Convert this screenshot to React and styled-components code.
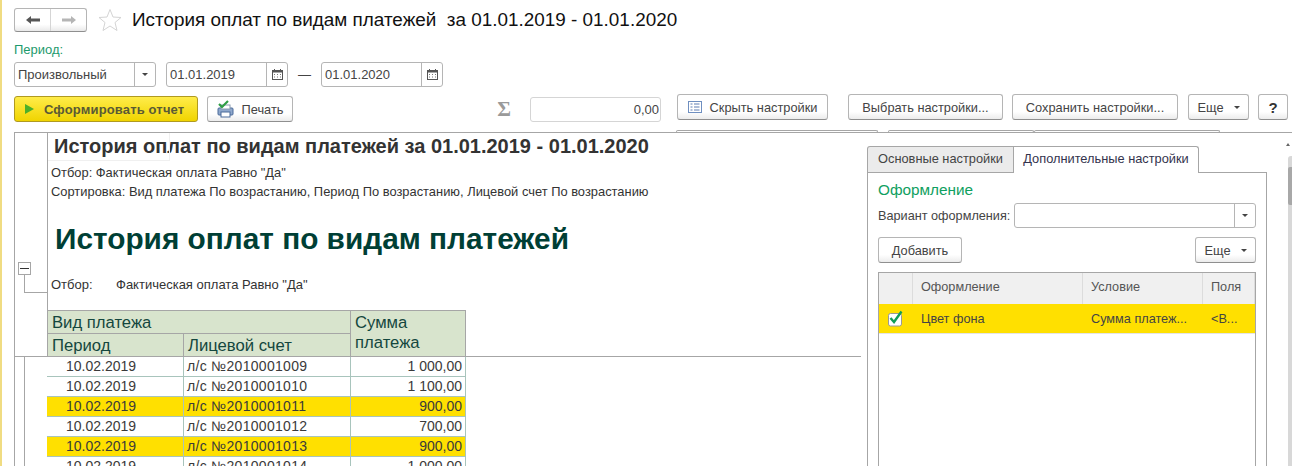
import React from 'react'
import styled, { createGlobalStyle } from 'styled-components'

const GlobalStyle = createGlobalStyle`
  html, body {
    margin: 0;
    padding: 0;
    background: #fff;
    overflow: hidden;
  }
  body {
    font-family: "Liberation Sans", Arial, sans-serif;
    color: #333;
  }
`

const rows = [
  { date: '10.02.2019', account: 'л/с №2010001009', sum: '1 000,00' },
  { date: '10.02.2019', account: 'л/с №2010001010', sum: '1 100,00' },
  { date: '10.02.2019', account: 'л/с №2010001011', sum: '900,00', marked: true },
  { date: '10.02.2019', account: 'л/с №2010001012', sum: '700,00' },
  { date: '10.02.2019', account: 'л/с №2010001013', sum: '900,00', marked: true },
  { date: '10.02.2019', account: 'л/с №2010001014', sum: '1 000,00' },
]

function ArrowLeft({ color }) {
  return (
    <svg width="16" height="10" viewBox="0 0 16 10">
      <path d="M1 5 L6 1 V3.5 H15 V6.5 H6 V9 Z" fill={color} />
    </svg>
  )
}

function ArrowRight({ color }) {
  return (
    <svg width="16" height="10" viewBox="0 0 16 10">
      <path d="M15 5 L10 1 V3.5 H1 V6.5 H10 V9 Z" fill={color} />
    </svg>
  )
}

function Star() {
  return (
    <svg width="24" height="24" viewBox="0 0 24 24">
      <path d="M12 1.5 L15 9 L23 9.5 L17 14.5 L19 22.5 L12 18 L5 22.5 L7 14.5 L1 9.5 L9 9 Z" fill="#fff" stroke="#d4d4d4" strokeWidth="1" />
    </svg>
  )
}

function Calendar() {
  return (
    <svg width="11" height="11" viewBox="0 0 11 11">
      <rect x="0.5" y="1.5" width="10" height="9" fill="#fff" stroke="#555" />
      <rect x="0.5" y="1.5" width="10" height="2" fill="#555" />
      <path d="M2.5 0 V2 M8.5 0 V2" stroke="#555" />
      <path d="M2 5.5 H3 M5 5.5 H6 M8 5.5 H9 M2 8 H3 M5 8 H6 M8 8 H9" stroke="#777" />
    </svg>
  )
}

function PrintIcon() {
  return (
    <svg width="17" height="18" viewBox="0 0 17 18">
      <rect x="1" y="8" width="15" height="7" rx="1" fill="#8fa8cc" stroke="#4a6a9a" />
      <rect x="4" y="12" width="9" height="5" fill="#fff" stroke="#4a6a9a" />
      <rect x="4" y="5" width="9" height="4" fill="#fff" stroke="#8a9ab0" />
      <path d="M2 4 L5 7 L11 1" fill="none" stroke="#2f9e44" strokeWidth="2.2" />
    </svg>
  )
}

function SettingsIcon() {
  return (
    <svg width="14" height="12" viewBox="0 0 14 12">
      <rect x="0.5" y="0.5" width="13" height="11" fill="#fff" stroke="#6f8fc0" />
      <path d="M2.5 3 H4.5 M2.5 6 H4.5 M2.5 9 H4.5 M6 3 H11.5 M6 6 H11.5 M6 9 H11.5" stroke="#5c7db3" />
    </svg>
  )
}

function CheckMark() {
  return (
    <svg width="17" height="17" viewBox="0 0 17 17">
      <rect x="1.5" y="3.5" width="13" height="12.5" rx="2" fill="#fff" stroke="#999" />
      <path d="M3.5 8 L7 12 L14.5 1.5" fill="none" stroke="#0f9d58" strokeWidth="2.4" />
    </svg>
  )
}

export default function App() {
  return (
    <Page>
      <GlobalStyle />
      <Header>
        <NavGroup>
          <NavCell><ArrowLeft color="#555" /></NavCell>
          <NavCell $divided><ArrowRight color="#b5b5b5" /></NavCell>
        </NavGroup>
        <StarSlot><Star /></StarSlot>
        <Title>История оплат по видам платежей&nbsp; за 01.01.2019 - 01.01.2020</Title>
      </Header>

      <PeriodLabel>Период:</PeriodLabel>
      <PeriodRow>
        <Field $width={142}>
          <FieldText>Произвольный</FieldText>
          <FieldButton><Caret /></FieldButton>
        </Field>
        <Field $width={122} $left={10}>
          <FieldText>01.01.2019</FieldText>
          <FieldButton><Calendar /></FieldButton>
        </Field>
        <Dash>—</Dash>
        <Field $width={122}>
          <FieldText>01.01.2020</FieldText>
          <FieldButton><Calendar /></FieldButton>
        </Field>
      </PeriodRow>

      <ActionRow>
        <PrimaryButton><PlayIcon />Сформировать отчет</PrimaryButton>
        <PlainButton $width={86} $left={9}><PrintIcon />Печать</PlainButton>
        <Sigma>Σ</Sigma>
        <SumField>0,00</SumField>
        <SettingsBar>
          <PlainButton $width={151}><SettingsIcon />Скрыть настройки</PlainButton>
          <PlainButton $width={155} $left={20}>Выбрать настройки...</PlainButton>
          <PlainButton $width={166} $left={9}>Сохранить настройки...</PlainButton>
          <PlainButton $width={61} $left={10}>Еще <SmallCaret /></PlainButton>
          <PlainButton $width={30} $left={9}><Question>?</Question></PlainButton>
        </SettingsBar>
      </ActionRow>

      <ClippedRow>
        <ClippedTab $width={202} $left={662} />
        <ClippedTab $width={146} $left={10} />
        <ClippedTab $width={186} />
      </ClippedRow>

      <Body>
        <Gutter>
          <GutterTop>
            <Collapse />
          </GutterTop>
          <GutterBottom />
        </Gutter>
        <Report>
          <ReportTitle>История оплат по видам платежей за 01.01.2019 - 01.01.2020</ReportTitle>
          <ReportNote $top={2}>Отбор: Фактическая оплата Равно "Да"</ReportNote>
          <ReportNote>Сортировка: Вид платежа По возрастанию, Период По возрастанию, Лицевой счет По возрастанию</ReportNote>
          <BigTitle>История оплат по видам платежей</BigTitle>
          <FilterRow>
            <span>Отбор:</span>
            <span>Фактическая оплата Равно "Да"</span>
          </FilterRow>
          <Table>
            <HeadCell $area="1 / 1 / 2 / 3" $first>Вид платежа</HeadCell>
            <HeadCell $area="1 / 3 / 3 / 4">Сумма платежа</HeadCell>
            <HeadCell $area="2 / 1 / 3 / 2" $first>Период</HeadCell>
            <HeadCell $area="2 / 2 / 3 / 3">Лицевой счет</HeadCell>
            {rows.map((row) => (
              <React.Fragment key={row.account}>
                <DateCell $marked={row.marked}>{row.date}</DateCell>
                <AccountCell $marked={row.marked}>{row.account}</AccountCell>
                <SumCell $marked={row.marked}>{row.sum}</SumCell>
              </React.Fragment>
            ))}
          </Table>
          <TableRule />
        </Report>
        <Panel>
          <Tabs>
            <Tab $width={147}>Основные настройки</Tab>
            <Tab $width={185} $active>Дополнительные настройки</Tab>
          </Tabs>
          <TabBody>
            <SectionTitle>Оформление</SectionTitle>
            <VariantRow>
              <VariantLabel>Вариант оформления:</VariantLabel>
              <VariantField><FieldButton><Caret /></FieldButton></VariantField>
            </VariantRow>
            <ListTools>
              <PlainButton $width={84}>Добавить</PlainButton>
              <PlainButton $width={61}>Еще <SmallCaret /></PlainButton>
            </ListTools>
            <ListBox>
              <ListHead>
                <ListHeadCell />
                <ListHeadCell>Оформление</ListHeadCell>
                <ListHeadCell>Условие</ListHeadCell>
                <ListHeadCell>Поля</ListHeadCell>
              </ListHead>
              <ListRow>
                <ListCell><CheckMark /></ListCell>
                <ListCell>Цвет фона</ListCell>
                <ListCell>Сумма платеж...</ListCell>
                <ListCell>&lt;В...</ListCell>
              </ListRow>
            </ListBox>
          </TabBody>
        </Panel>
        <ScrollArrow />
        <PageScroll>
          <PageThumb />
        </PageScroll>
      </Body>
    </Page>
  )
}

const Page = styled.div`
  width: 1292px;
  height: 466px;
  box-sizing: border-box;
  overflow: hidden;
  border-left: 2px solid #f0dc82;
  padding-left: 12px;
  display: flex;
  flex-direction: column;
`

const Header = styled.div`
  display: flex;
  align-items: center;
  height: 26px;
  margin-top: 7px;
`

const NavGroup = styled.div`
  display: flex;
  width: 73px;
  height: 24px;
  box-sizing: border-box;
  border: 1px solid #b5b5b5;
  border-bottom-color: #8f8f8f;
  border-radius: 3px;
  background: linear-gradient(#fff 70%, #e9e9e9);
`

const NavCell = styled.div`
  flex: 1;
  display: flex;
  align-items: center;
  justify-content: center;
  border-left: ${(props) => (props.$divided ? '1px solid #d5d5d5' : 'none')};
`

const StarSlot = styled.div`
  display: flex;
  margin-left: 11px;
`

const Title = styled.h1`
  margin: 0 0 0 10px;
  font-size: 18.9px;
  font-weight: 400;
  color: #111;
  white-space: nowrap;
`

const PeriodLabel = styled.div`
  margin-top: 9px;
  height: 15px;
  line-height: 15px;
  font-size: 13px;
  color: #1d9a6c;
`

const PeriodRow = styled.div`
  display: flex;
  align-items: center;
  margin-top: 5px;
`

const Field = styled.div`
  display: flex;
  width: ${(props) => props.$width}px;
  height: 25px;
  margin-left: ${(props) => props.$left || 0}px;
  box-sizing: border-box;
  border: 1px solid #b5b5b5;
  border-radius: 3px;
  background: #fff;
`

const FieldText = styled.div`
  flex: 1;
  padding-left: 3px;
  font-size: 13px;
  line-height: 23px;
  color: #444;
`

const FieldButton = styled.div`
  width: 21px;
  flex: none;
  display: flex;
  align-items: center;
  justify-content: center;
  border-left: 1px solid #b5b5b5;
  box-sizing: border-box;
`

const Caret = styled.span`
  width: 0;
  height: 0;
  border-left: 3px solid transparent;
  border-right: 3px solid transparent;
  border-top: 3px solid #444;
`

const SmallCaret = styled(Caret)`
  display: inline-block;
  margin-left: 2px;
  vertical-align: middle;
`

const Dash = styled.div`
  width: 33px;
  text-align: center;
  font-size: 13px;
  color: #444;
`

const ActionRow = styled.div`
  display: flex;
  align-items: center;
  height: 26px;
  margin-top: 9px;
`

const PrimaryButton = styled.div`
  width: 184px;
  height: 26px;
  box-sizing: border-box;
  display: flex;
  align-items: center;
  padding-left: 10px;
  gap: 10px;
  border: 1px solid #b09a20;
  border-radius: 3px;
  background: linear-gradient(#ffec4a, #f0d400);
  font-size: 13px;
  font-weight: 700;
  letter-spacing: 0.15px;
  color: #5a5a35;
  white-space: nowrap;
`

const PlayIcon = styled.span`
  width: 0;
  height: 0;
  border-top: 5px solid transparent;
  border-bottom: 5px solid transparent;
  border-left: 9px solid #4caf2a;
`

const PlainButton = styled.div`
  width: ${(props) => props.$width}px;
  height: 26px;
  margin-left: ${(props) => props.$left || 0}px;
  flex: none;
  box-sizing: border-box;
  display: flex;
  align-items: center;
  justify-content: center;
  gap: 8px;
  border: 1px solid #b5b5b5;
  border-bottom-color: #8f8f8f;
  border-radius: 3px;
  background: linear-gradient(#fff 70%, #ececec);
  font-size: 12.8px;
  color: #444;
  white-space: nowrap;
`

const Sigma = styled.div`
  width: 16px;
  margin-left: 203px;
  font-family: "Liberation Serif", serif;
  font-size: 21px;
  font-weight: 700;
  color: #9a9a9a;
  text-align: center;
`

const SumField = styled.div`
  width: 131px;
  height: 25px;
  margin-left: 18px;
  box-sizing: border-box;
  border: 1px solid #d5d5d5;
  border-radius: 3px;
  padding-right: 1px;
  text-align: right;
  font-size: 13px;
  line-height: 23px;
  color: #444;
`

const SettingsBar = styled.div`
  display: flex;
  align-self: flex-start;
  margin: -2px 0 0 16px;
`

const Question = styled.span`
  font-size: 15px;
  font-weight: 700;
  color: #333;
`

const ClippedRow = styled.div`
  display: flex;
  height: 2px;
  margin-top: 8px;
`

const ClippedTab = styled.div`
  width: ${(props) => props.$width}px;
  margin-left: ${(props) => props.$left || 0}px;
  box-sizing: border-box;
  border: 1px solid #a6a6a6;
  border-bottom: none;
  border-radius: 2px 2px 0 0;
`

const Body = styled.div`
  position: relative;
  display: flex;
  flex: 1;
  min-height: 0;
  border-top: 1px solid #a6a6a6;
`

const Gutter = styled.div`
  width: 33px;
  flex: none;
  border-left: 1px solid #a6a6a6;
`

const GutterTop = styled.div`
  position: relative;
  height: 223px;
  border-right: 1px solid #a6a6a6;
  border-bottom: 1px solid #a6a6a6;
`

const GutterBottom = styled.div`
  height: 110px;
  margin-left: 9px;
  border-left: 1px solid #a6a6a6;
`

const Collapse = styled.div`
  position: absolute;
  left: 3px;
  top: 129px;
  width: 11px;
  height: 11px;
  border: 1px solid #a6a6a6;
  background: linear-gradient(#333, #333) center / 9px 1px no-repeat, #fff;
  &::after {
    content: '';
    position: absolute;
    left: 5px;
    top: 11px;
    width: 22px;
    height: 18px;
    border-left: 1px solid #a6a6a6;
    border-bottom: 1px solid #a6a6a6;
  }
`

const Report = styled.div`
  position: relative;
  width: 813px;
  flex: none;
`

const ReportTitle = styled.div`
  position: relative;
  height: 28px;
  padding-left: 6px;
  line-height: 27px;
  font-size: 20px;
  font-weight: 700;
  color: #333;
  white-space: nowrap;
  &::before {
    content: '';
    position: absolute;
    left: 0;
    top: 0;
    width: 122px;
    height: 28px;
    box-sizing: border-box;
    border-right: 1px solid #f0f0f0;
    border-bottom: 1px solid #f0f0f0;
  }
`

const ReportNote = styled.div`
  height: 19px;
  margin-top: ${(props) => props.$top || 0}px;
  padding-left: 3px;
  line-height: 19px;
  font-size: 12.9px;
  color: #333;
  white-space: nowrap;
`

const BigTitle = styled.div`
  margin-top: 16px;
  padding-left: 7px;
  height: 44px;
  line-height: 44px;
  font-size: 29.8px;
  font-weight: 700;
  color: #003f35;
  white-space: nowrap;
`

const FilterRow = styled.div`
  display: flex;
  margin-top: 16px;
  padding-left: 3px;
  height: 16px;
  line-height: 16px;
  font-size: 13px;
  color: #333;
  & > span:first-child {
    width: 65px;
  }
`

const Table = styled.div`
  display: grid;
  grid-template-columns: 137px 167px 115px;
  grid-template-rows: 23px 23px repeat(6, 20px);
  width: 419px;
  margin: 17px 0 0 -1px;
  border-top: 1px solid #a6a6a6;
`

const HeadCell = styled.div`
  grid-area: ${(props) => props.$area};
  box-sizing: border-box;
  padding: 2px 4px 0;
  background: #d8e4cd;
  border-left: ${(props) => (props.$first ? '1px solid #a6a6a6' : 'none')};
  border-right: 1px solid #a6a6a6;
  border-bottom: 1px solid #a6a6a6;
  font-size: 16.67px;
  line-height: 20px;
  color: #14473e;
`

const Cell = styled.div`
  box-sizing: border-box;
  background: ${(props) => (props.$marked ? '#ffe000' : '#fff')};
  border-right: 1px solid #a8c4bc;
  border-bottom: 1px solid #a8c4bc;
  font-size: 14px;
  line-height: 19px;
  color: #3a3a3a;
  white-space: nowrap;
`

const DateCell = styled(Cell)`
  padding-left: 19px;
`

const AccountCell = styled(Cell)`
  padding-left: 3px;
  letter-spacing: 0.3px;
`

const SumCell = styled(Cell)`
  padding-right: 3px;
  text-align: right;
`

const TableRule = styled.div`
  position: absolute;
  left: 418px;
  top: 223px;
  width: 395px;
  height: 1px;
  background: #a6a6a6;
`

const Panel = styled.div`
  width: 400px;
  margin-left: 6px;
  margin-top: 13px;
  flex: none;
  display: flex;
  flex-direction: column;
`

const Tabs = styled.div`
  display: flex;
  align-items: flex-start;
  height: 26px;
`

const Tab = styled.div`
  width: ${(props) => props.$width}px;
  height: ${(props) => (props.$active ? 27 : 26)}px;
  box-sizing: border-box;
  text-align: center;
  line-height: 24px;
  font-size: 12.8px;
  color: ${(props) => (props.$active ? '#33334d' : '#444')};
  background: ${(props) => (props.$active ? '#fff' : '#ebebeb')};
  border: 1px solid #a6a6a6;
  border-left-width: ${(props) => (props.$active ? 0 : 1)}px;
  border-bottom: none;
  border-radius: ${(props) => (props.$active ? '0 3px 0 0' : '3px 0 0 0')};
  position: relative;
  z-index: ${(props) => (props.$active ? 1 : 0)};
`

const TabBody = styled.div`
  flex: 1;
  border: 1px solid #a6a6a6;
  border-bottom: none;
  padding: 0 10px;
`

const SectionTitle = styled.div`
  margin-top: 8px;
  height: 18px;
  line-height: 18px;
  font-size: 15.33px;
  color: #0fa060;
`

const VariantRow = styled.div`
  display: flex;
  align-items: center;
  margin-top: 4px;
  font-size: 12.7px;
  color: #444;
`

const VariantLabel = styled.div`
  width: 136px;
  flex: none;
  white-space: nowrap;
`

const VariantField = styled.div`
  flex: 1;
  display: flex;
  justify-content: flex-end;
  height: 25px;
  box-sizing: border-box;
  border: 1px solid #b5b5b5;
  border-radius: 3px;
`

const ListTools = styled.div`
  display: flex;
  justify-content: space-between;
  margin-top: 9px;
`

const ListBox = styled.div`
  margin-top: 9px;
  height: 200px;
  border: 1px solid #a6a6a6;
  border-bottom: none;
`

const ListHead = styled.div`
  display: grid;
  grid-template-columns: 34px 170px 120px 1fr;
  height: 31px;
  background: #f0f0f0;
`

const ListHeadCell = styled.div`
  box-sizing: border-box;
  padding-left: 8px;
  border-right: 1px solid #dcdcdc;
  font-size: 12.7px;
  line-height: 29px;
  color: #555;
`

const ListRow = styled.div`
  display: grid;
  grid-template-columns: 34px 170px 120px 1fr;
  height: 29px;
  background: #ffe000;
  border-bottom: 1px solid #e5e5e5;
`

const ListCell = styled.div`
  box-sizing: border-box;
  display: flex;
  align-items: center;
  padding-left: 8px;
  font-size: 12.7px;
  color: #444;
  white-space: nowrap;
`

const ScrollArrow = styled.div`
  position: absolute;
  left: 1272px;
  top: 10px;
  width: 0;
  height: 0;
  border-left: 2px solid transparent;
  border-right: 2px solid transparent;
  border-bottom: 3px solid #666;
`

const PageScroll = styled.div`
  position: absolute;
  right: 0;
  top: 23px;
  bottom: 0;
  width: 4px;
  padding-top: 11px;
  border-radius: 3px 0 0 0;
  background: #d8d8d8;
`

const PageThumb = styled.div`
  height: 38px;
  border-radius: 2px 0 0 2px;
  background: #a8a8a8;
`
